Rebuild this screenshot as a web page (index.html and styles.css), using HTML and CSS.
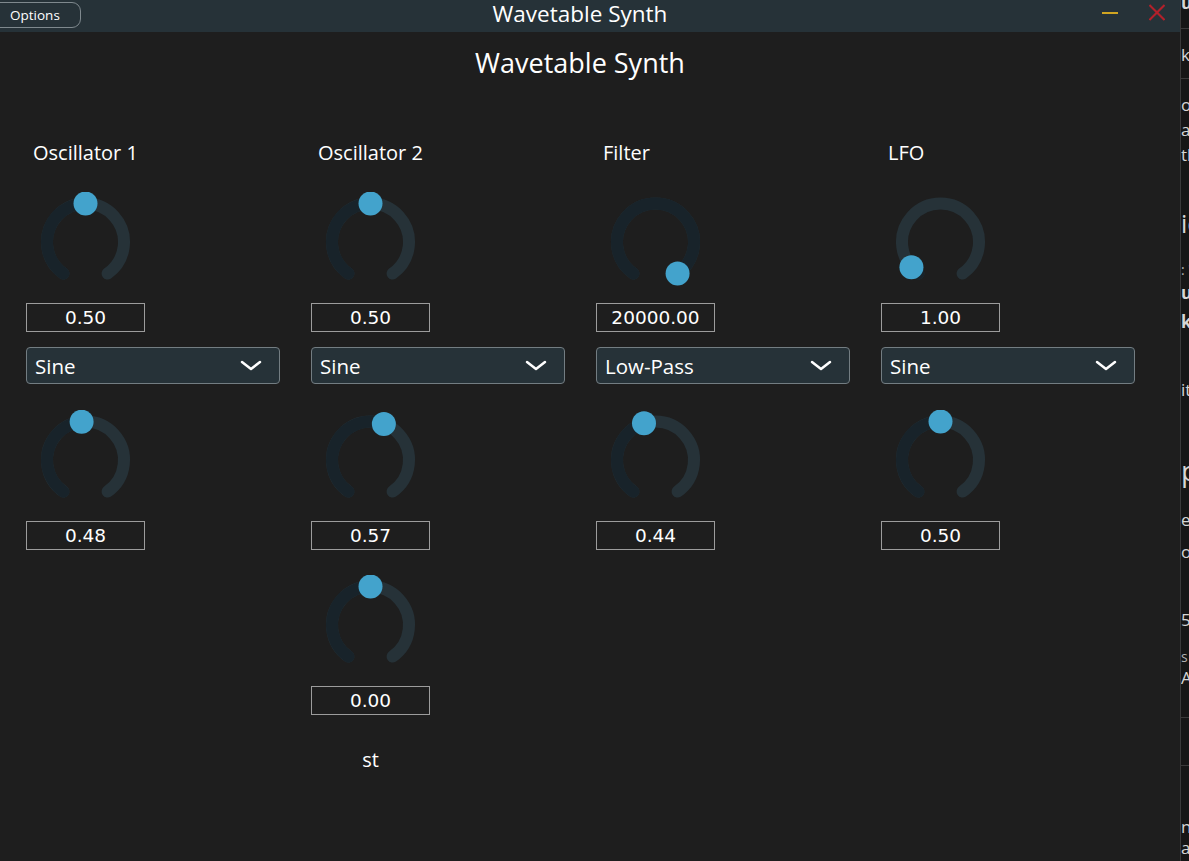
FILE: index.html
```html
<!DOCTYPE html>
<html lang="en">
<head>
<meta charset="utf-8">
<title>Wavetable Synth</title>
<link rel="stylesheet" href="styles.css">
</head>
<body>
<div class="window">
  <header class="titlebar">
    <button class="opt-btn">Options</button>
    <div class="title">Wavetable Synth</div>
    <div class="wincontrols">
      <svg class="wc" viewBox="0 0 16 17" width="16" height="17"><line x1="0" y1="9" x2="16" y2="9" class="wc-min"/></svg>
      <svg class="wc" viewBox="0 0 16 17" width="16" height="17"><line x1="0.5" y1="1" x2="15.5" y2="16" class="wc-close"/><line x1="15.5" y1="1" x2="0.5" y2="16" class="wc-close"/></svg>
    </div>
  </header>
  <main class="panel">
    <h1 class="heading">Wavetable Synth</h1>
    <div class="columns">
      <section class="col">
        <div class="label">Oscillator 1</div>
        <svg class="knob" viewBox="0 0 119 100"><path class="track" d="M37.42 81.54A38.5 38.5 0 1 1 81.58 81.54"/><path class="fill" d="M37.42 81.54A38.5 38.5 0 0 1 59.5 11.5"/><circle class="thumb" cx="59.5" cy="11.5" r="12"/></svg>
        <div class="value">0.50</div>
        <div class="select"><span>Sine</span><svg class="chev" viewBox="0 0 22 11" width="22" height="11"><polyline points="2,2 11,9 20,2"/></svg></div>
        <svg class="knob" viewBox="0 0 119 100"><path class="track" d="M37.42 81.54A38.5 38.5 0 1 1 81.58 81.54"/><path class="fill" d="M37.42 81.54A38.5 38.5 0 0 1 55.61 11.7"/><circle class="thumb" cx="55.61" cy="11.7" r="12"/></svg>
        <div class="value">0.48</div>
      </section>
      <section class="col">
        <div class="label">Oscillator 2</div>
        <svg class="knob" viewBox="0 0 119 100"><path class="track" d="M37.42 81.54A38.5 38.5 0 1 1 81.58 81.54"/><path class="fill" d="M37.42 81.54A38.5 38.5 0 0 1 59.5 11.5"/><circle class="thumb" cx="59.5" cy="11.5" r="12"/></svg>
        <div class="value">0.50</div>
        <div class="select"><span>Sine</span><svg class="chev" viewBox="0 0 22 11" width="22" height="11"><polyline points="2,2 11,9 20,2"/></svg></div>
        <svg class="knob" viewBox="0 0 119 100"><path class="track" d="M37.42 81.54A38.5 38.5 0 1 1 81.58 81.54"/><path class="fill" d="M37.42 81.54A38.5 38.5 0 0 1 72.86 13.89"/><circle class="thumb" cx="72.86" cy="13.89" r="12"/></svg>
        <div class="value">0.57</div>
        <svg class="knob" viewBox="0 0 119 100"><path class="track" d="M37.42 81.54A38.5 38.5 0 1 1 81.58 81.54"/><path class="fill" d="M37.42 81.54A38.5 38.5 0 0 1 59.5 11.5"/><circle class="thumb" cx="59.5" cy="11.5" r="12"/></svg>
        <div class="value">0.00</div>
        <div class="unit">st</div>
      </section>
      <section class="col">
        <div class="label">Filter</div>
        <svg class="knob" viewBox="0 0 119 100"><path class="track" d="M37.42 81.54A38.5 38.5 0 1 1 81.58 81.54"/><path class="fill" d="M37.42 81.54A38.5 38.5 0 1 1 81.58 81.54"/><circle class="thumb" cx="81.58" cy="81.54" r="12"/></svg>
        <div class="value">20000.00</div>
        <div class="select"><span>Low-Pass</span><svg class="chev" viewBox="0 0 22 11" width="22" height="11"><polyline points="2,2 11,9 20,2"/></svg></div>
        <svg class="knob" viewBox="0 0 119 100"><path class="track" d="M37.42 81.54A38.5 38.5 0 1 1 81.58 81.54"/><path class="fill" d="M37.42 81.54A38.5 38.5 0 0 1 47.99 13.26"/><circle class="thumb" cx="47.99" cy="13.26" r="12"/></svg>
        <div class="value">0.44</div>
      </section>
      <section class="col">
        <div class="label">LFO</div>
        <svg class="knob" viewBox="0 0 119 100"><path class="track" d="M37.42 81.54A38.5 38.5 0 1 1 81.58 81.54"/><path class="fill" d="M37.42 81.54A38.5 38.5 0 0 1 30.44 75.26"/><circle class="thumb" cx="30.44" cy="75.26" r="12"/></svg>
        <div class="value">1.00</div>
        <div class="select"><span>Sine</span><svg class="chev" viewBox="0 0 22 11" width="22" height="11"><polyline points="2,2 11,9 20,2"/></svg></div>
        <svg class="knob" viewBox="0 0 119 100"><path class="track" d="M37.42 81.54A38.5 38.5 0 1 1 81.58 81.54"/><path class="fill" d="M37.42 81.54A38.5 38.5 0 0 1 59.5 11.5"/><circle class="thumb" cx="59.5" cy="11.5" r="12"/></svg>
        <div class="value">0.50</div>
      </section>
    </div>
  </main>
</div>
<aside class="side">
  <div class="fr f1 bold">ul</div>
  <div class="rule r1"></div>
  <div class="fr f2">ke</div>
  <div class="rule r2"></div>
  <div class="fr f3">ol</div>
  <div class="fr f4">ar</div>
  <div class="fr f5">th</div>
  <div class="fr f6 big">ic</div>
  <div class="fr f7 small">: '</div>
  <div class="fr f8 bold">ut</div>
  <div class="fr f9 bold">k</div>
  <div class="fr f10">it</div>
  <div class="fr f11 bigger">p</div>
  <div class="fr f12">e</div>
  <div class="fr f13">ou</div>
  <div class="fr f14">50</div>
  <div class="fr f15 small">s</div>
  <div class="fr f16">AS</div>
  <div class="rule r3"></div>
  <div class="rule r4"></div>
  <div class="fr f17">nc</div>
  <div class="fr f18">as</div>
</aside>
</body>
</html>
```
FILE: styles.css
```css
* { box-sizing: border-box; }
html, body { margin: 0; height: 100%; }
body {
  background: #1e1e1e;
  overflow: hidden;
  display: flex;
  font-family: "Open Sans", "DejaVu Sans", sans-serif;
  color: #ffffff;
}
.window {
  width: 1180px;
  flex: none;
  display: flex;
  flex-direction: column;
  background: #1e1e1e;
}
.titlebar {
  height: 32px;
  flex: none;
  background: #263238;
  display: grid;
  grid-template-columns: 1fr auto 1fr;
  align-items: center;
  padding-right: 20px;
}
.opt-btn {
  justify-self: start;
  align-self: start;
  margin: 2px 0 0 -12px;
  width: 93px;
  height: 26px;
  border: 1.5px solid #7f898e;
  border-radius: 9px;
  background: #263238;
  color: #ffffff;
  font: 13.5px "Open Sans", sans-serif;
  text-align: left;
  padding: 0 0 0 21px;
}
.title {
  align-self: start;
  font-size: 22.5px;
  line-height: 28px;
  white-space: nowrap;
}
.wincontrols {
  justify-self: end;
  align-self: start;
  margin: 4px -5px 0 0;
  display: flex;
  gap: 31px;
}
.wc { display: block; }
.wc-min { stroke: #d0a521; stroke-width: 2; }
.wc-close { stroke: #b3202a; stroke-width: 2; }

.panel { flex: 1; padding-right: 20px; }
.heading {
  margin: 15px 0 0;
  text-align: center;
  font-size: 27px;
  line-height: 32px;
  font-weight: 400;
}
.columns {
  display: flex;
  gap: 31px;
  margin-top: 62px;
  padding-left: 26px;
}
.col {
  width: 254px;
  display: flex;
  flex-direction: column;
  align-items: flex-start;
}
.label {
  font-size: 20px;
  line-height: 24px;
  margin-left: 7px;
}
.knob {
  display: block;
  width: 119px;
  height: 100px;
  margin-top: 25px;
}
.label + .knob { margin-top: 26.5px; }
.select + .knob { margin-top: 25.5px; }
.knob .track, .knob .fill {
  fill: none;
  stroke-width: 12;
  stroke-linecap: round;
}
.knob .track { stroke: #263238; }
.knob .fill { stroke: #18232a; }
.knob .thumb { fill: #43a3cc; }
.value {
  width: 119px;
  height: 29px;
  margin-top: 11px;
  border: 1px solid #9c9c9c;
  font: 18.5px "DejaVu Sans", sans-serif;
  display: flex;
  align-items: center;
  justify-content: center;
}
.select {
  width: 254px;
  height: 37px;
  margin-top: 15.5px;
  background: #263238;
  border: 1px solid #737d82;
  border-radius: 4px;
  padding: 0 17px 0 8px;
  display: flex;
  align-items: center;
  justify-content: space-between;
  font-size: 20.5px;
}
.chev { display: block; }
.chev polyline {
  fill: none;
  stroke: #ffffff;
  stroke-width: 2.5;
  stroke-linecap: round;
  stroke-linejoin: round;
}
.unit {
  width: 119px;
  text-align: center;
  margin-top: 33.5px;
  font-size: 20px;
  line-height: 24px;
}

/* partially visible window behind, on the right edge */
.side {
  flex: 1;
  border-left: 1px solid #3a3a3a;
  background: #161616;
  overflow: hidden;
  display: flex;
  flex-direction: column;
  font-size: 17px;
  line-height: 20px;
  color: #d6d6d6;
  white-space: nowrap;
}
.fr { height: 20px; flex: none; }
.fr.bold { font-weight: 700; }
.fr.small { font-size: 14px; color: #b0b0b0; }
.fr.big { font-size: 25px; height: 30px; line-height: 30px; }
.fr.bigger { font-size: 28px; height: 34px; line-height: 34px; }
.rule { height: 1px; flex: none; background: #3a3a3a; }
.f1 { margin-top: -7px; }
.r1 { margin-top: 15px; }
.f2 { margin-top: 16px; }
.r2 { margin-top: 13px; }
.f3 { margin-top: 16px; }
.f4 { margin-top: 5px; }
.f5 { margin-top: 5px; }
.f6 { margin-top: 43px; }
.f7 { margin-top: 22px; }
.f8 { margin-top: 3px; }
.f9 { margin-top: 9px; }
.f10 { margin-top: 48px; }
.f11 { margin-top: 53px; }
.f12 { margin-top: 23px; }
.f13 { margin-top: 12px; }
.f14 { margin-top: 48px; }
.f15 { margin-top: 17px; }
.f16 { margin-top: 1px; }
.r3 { margin-top: 29px; }
.r4 { margin-top: 47px; }
.f17 { margin-top: 51px; }
.f18 { margin-top: 1px; }
```
